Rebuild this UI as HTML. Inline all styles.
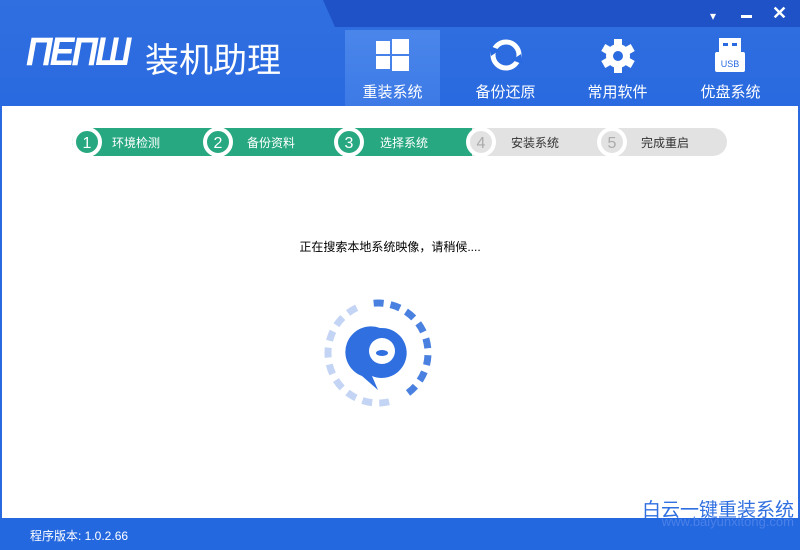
<!DOCTYPE html>
<html><head><meta charset="utf-8"><style>
*{margin:0;padding:0;box-sizing:border-box}
body{width:800px;height:550px;overflow:hidden;font-family:"Liberation Sans","Noto Sans CJK SC",sans-serif;background:#fff;position:relative}
.hdr{position:absolute;left:0;top:0;width:800px;height:106px;background:linear-gradient(180deg,#2f6fe0,#2a6ae0)}
.band{position:absolute;left:335px;top:0;width:465px;height:27px;background:#1f52c7}
.band:before{content:"";position:absolute;left:-12px;top:0;border-top:27px solid #1f52c7;border-left:12px solid transparent}
.tab{position:absolute;top:30px;width:95px;height:76px;color:#fff;font-size:15px;text-align:center}
.tab span{position:absolute;left:0;right:0;top:51px}
.tab.act{background:linear-gradient(180deg,#4a86ea,#3d7ae6)}
.logo{position:absolute;left:26px;top:30px;color:#fff;font-size:40px;font-weight:bold;font-style:italic;letter-spacing:-3px;transform:scaleX(0.92);transform-origin:left}
.title{position:absolute;left:145px;top:33px;color:#fff;font-size:34px}
.ftr{position:absolute;left:0;top:518px;width:800px;height:32px;background:#2468e0;color:#fff;font-size:12px}
.side{position:absolute;top:106px;width:2px;height:412px;background:#2a6ae0}
.msg{position:absolute;left:0;width:780px;top:238px;text-align:center;font-size:12px;color:#000}
.wm{position:absolute;right:6px;top:495px;color:#2f6fe0;font-size:19px}
</style></head><body>
<div class="hdr">
<div class="band"></div>
<div style="position:absolute;left:710px;top:9px;color:#fff;font-size:12px">&#9662;</div>
<div style="position:absolute;left:741px;top:15px;width:11px;height:3px;background:#fff"></div>
<div style="position:absolute;left:772px;top:3px;color:#fff;font-size:18px;font-weight:bold">✕</div>
<div class="logo">ПЕПШ</div>
<div class="title">装机助理</div>
<div class="tab act" style="left:345px">
<svg width="95" height="50" style="position:absolute;left:0;top:0"><g fill="#fff"><rect x="31" y="11" width="14" height="13"/><rect x="47" y="9" width="17" height="15"/><rect x="31" y="26" width="14" height="13"/><rect x="47" y="26" width="17" height="15"/></g></svg><span>重装系统</span></div>
<div class="tab" style="left:458px">
<svg width="95" height="50" style="position:absolute;left:0;top:0"><circle cx="48" cy="25" r="13" fill="none" stroke="#fff" stroke-width="5"/><path d="M32 16 l10 4 -9 6z M64 34 l-10 -4 9 -6z" fill="#2a6ae0"/></svg><span>备份还原</span></div>
<div class="tab" style="left:570px">
<svg width="95" height="50" style="position:absolute;left:0;top:0"><g transform="translate(48,26)"><circle r="12" fill="#fff"/><g fill="#fff"><rect x="-4" y="-17" width="8" height="34"/><rect x="-4" y="-17" width="8" height="34" transform="rotate(60)"/><rect x="-4" y="-17" width="8" height="34" transform="rotate(120)"/></g><circle r="5" fill="#2a6ae0"/></g></svg><span>常用软件</span></div>
<div class="tab" style="left:683px">
<svg width="95" height="50" style="position:absolute;left:0;top:0"><rect x="36" y="8" width="22" height="14" fill="#fff"/><rect x="40" y="13" width="5" height="3" fill="#2a6ae0"/><rect x="49" y="13" width="5" height="3" fill="#2a6ae0"/><rect x="32" y="22" width="30" height="20" rx="2" fill="#fff"/><text x="47" y="37" font-size="9" fill="#2a6ae0" text-anchor="middle" font-family="Liberation Sans">USB</text></svg><span>优盘系统</span></div>
</div>
<div class="side" style="left:0"></div><div class="side" style="left:798px"></div>
<svg width="800" height="60" style="position:absolute;left:0;top:110px" font-family="Liberation Sans,Noto Sans CJK SC,sans-serif">
<rect x="596" y="18" width="131" height="28" rx="14" fill="#e2e2e2"/>
<rect x="465" y="18" width="150" height="28" fill="#e2e2e2"/>
<rect x="72" y="18" width="400" height="28" rx="14" fill="#27a880"/>
<rect x="300" y="18" width="172" height="28" fill="#27a880"/>
<g font-size="12" fill="#fff"><text x="112" y="37">环境检测</text><text x="247" y="37">备份资料</text><text x="380" y="37">选择系统</text></g>
<g font-size="12" fill="#333"><text x="511" y="37">安装系统</text><text x="641" y="37">完成重启</text></g>
<g stroke="#fff" stroke-width="4"><circle cx="87" cy="32" r="13" fill="#27a880"/><circle cx="218" cy="32" r="13" fill="#27a880"/><circle cx="349" cy="32" r="13" fill="#27a880"/><circle cx="481" cy="32" r="13" fill="#e2e2e2"/><circle cx="612" cy="32" r="13" fill="#e2e2e2"/></g>
<g font-size="16" text-anchor="middle"><text x="87" y="38" fill="#fff">1</text><text x="218" y="38" fill="#fff">2</text><text x="349" y="38" fill="#fff">3</text><text x="481" y="38" fill="#aaa">4</text><text x="612" y="38" fill="#aaa">5</text></g>
</svg>
<div class="msg">正在搜索本地系统映像，请稍候....</div>
<svg width="140" height="140" style="position:absolute;left:308px;top:283px">
<g transform="translate(70,70)" fill="none" stroke-width="7">
<circle r="50" stroke="#4a80e0" stroke-dasharray="10 7 10 7 10 7 10 7 10 7 10 7 10 7 10 7 0 400" transform="rotate(-95)"/>
<circle r="50" stroke="#b8cdf2" stroke-dasharray="0 150 10 7 10 7 10 7 10 7 10 7 10 7 10 7 10 7 10 7" transform="rotate(-95)" opacity="0.85"/>
</g>
<path d="M72 45 a25 25 0 1 1 -8 48 l6 14 -16 -14 a25 25 0 0 1 18 -48z" fill="#2f6fe0"/>
<circle cx="74" cy="68" r="13" fill="#fff"/>
<ellipse cx="74" cy="70" rx="6" ry="3" fill="#2f6fe0"/>
</svg>
<div class="wm">白云一键重装系统</div>
<div class="ftr"><div style="position:absolute;left:30px;top:9px">程序版本: 1.0.2.66</div>
<div style="position:absolute;right:6px;top:-4px;color:#4a80e8;font-size:13px">www.baiyunxitong.com</div></div>
</body></html>
